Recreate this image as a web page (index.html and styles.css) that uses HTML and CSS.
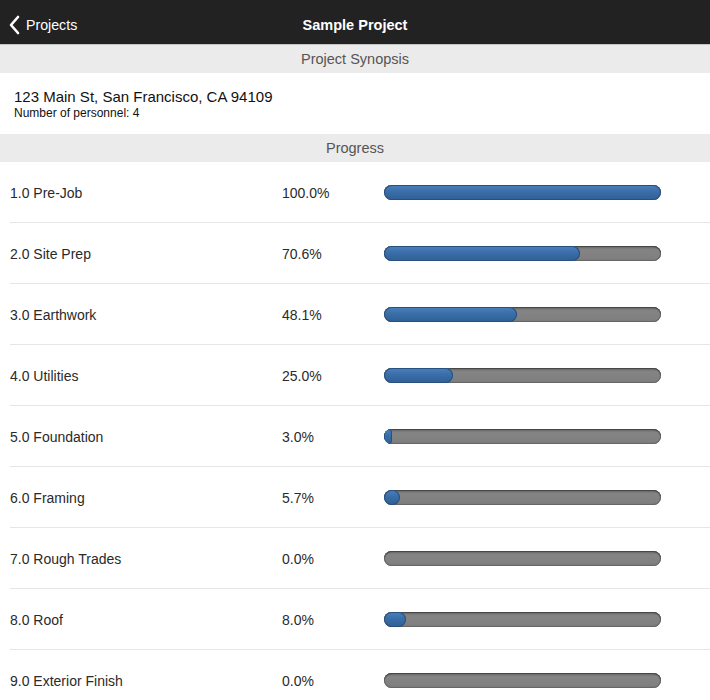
FILE: index.html
```html
<!DOCTYPE html>
<html>
<head>
<meta charset="utf-8">
<link rel="stylesheet" href="styles.css">
</head>
<body>
<div class="nav">
  <div class="back">
    <svg class="chev" width="12" height="20" viewBox="0 0 12 20"><path d="M10 2 L3 10 L10 18" fill="none" stroke="#fff" stroke-width="2.6" stroke-linecap="round" stroke-linejoin="round"/></svg>
    <span>Projects</span>
  </div>
  <div class="title">Sample Project</div>
</div>
<div class="section">Project Synopsis</div>
<div class="synopsis">
  <div class="addr">123 Main St, San Francisco, CA 94109</div>
  <div class="pers">Number of personnel: 4</div>
</div>
<div class="section">Progress</div>
<div class="list">
  <div class="row"><span class="name">1.0 Pre-Job</span><span class="pct">100.0%</span><div class="track"><div class="fill" style="width:100%"></div></div></div>
  <div class="row"><span class="name">2.0 Site Prep</span><span class="pct">70.6%</span><div class="track"><div class="fill" style="width:70.6%"></div></div></div>
  <div class="row"><span class="name">3.0 Earthwork</span><span class="pct">48.1%</span><div class="track"><div class="fill" style="width:48.1%"></div></div></div>
  <div class="row"><span class="name">4.0 Utilities</span><span class="pct">25.0%</span><div class="track"><div class="fill" style="width:25%"></div></div></div>
  <div class="row"><span class="name">5.0 Foundation</span><span class="pct">3.0%</span><div class="track"><div class="fill" style="width:3%"></div></div></div>
  <div class="row"><span class="name">6.0 Framing</span><span class="pct">5.7%</span><div class="track"><div class="fill" style="width:5.7%"></div></div></div>
  <div class="row"><span class="name">7.0 Rough Trades</span><span class="pct">0.0%</span><div class="track"><div class="fill" style="width:0%"></div></div></div>
  <div class="row"><span class="name">8.0 Roof</span><span class="pct">8.0%</span><div class="track"><div class="fill" style="width:8%"></div></div></div>
  <div class="row"><span class="name">9.0 Exterior Finish</span><span class="pct">0.0%</span><div class="track"><div class="fill" style="width:0%"></div></div></div>
</div>
</body>
</html>
```
FILE: styles.css
```css
* { box-sizing: border-box; }
html, body { margin: 0; padding: 0; }
body {
  font-family: "Liberation Sans", Arial, sans-serif;
  color: #2a2a2a;
  background: #fff;
  width: 710px;
  overflow: hidden;
}
.nav {
  height: 45px;
  padding-top: 5px;
  background: #222222;
  border-bottom: 1px solid #c4c4c4;
  position: relative;
  display: flex;
  align-items: center;
  justify-content: center;
}
.back {
  position: absolute;
  left: 8px;
  top: 5px;
  bottom: 0;
  display: flex;
  align-items: center;
  gap: 6px;
  color: #fff;
  font-size: 14.2px;
}
.chev { display: block; }
.title {
  color: #fff;
  font-weight: bold;
  font-size: 14.5px;
}
.section {
  height: 28px;
  background: #ebebeb;
  color: #555;
  font-size: 14.5px;
  display: flex;
  align-items: center;
  justify-content: center;
}
.synopsis {
  height: 61px;
  padding: 15px 14px 0;
}
.addr { font-size: 15px; color: #111; line-height: 17px; }
.pers { font-size: 12px; color: #111; line-height: 14px; margin-top: 1px; }
.list { padding-left: 10px; }
.row {
  height: 61px;
  display: flex;
  align-items: center;
  border-bottom: 1px solid #e6e6e6;
  font-size: 14px;
  padding-top: 1px;
}
.name { width: 272px; }
.pct { width: 102px; }
.track {
  width: 277px;
  height: 15px;
  border-radius: 8px;
  background: linear-gradient(#6a6a6a, #848484 25%, #808080 80%, #777);
  box-shadow: inset 0 1px 1px #444, inset 0 0 0 1px #666;
  overflow: hidden;
  margin-top: -1px;
}
.fill {
  height: 15px;
  border-radius: 8px;
  background: linear-gradient(#4a80bd, #3a6ea8 45%, #2f5f96);
  box-shadow: inset 0 0 0 1px #27507e;
}
```
